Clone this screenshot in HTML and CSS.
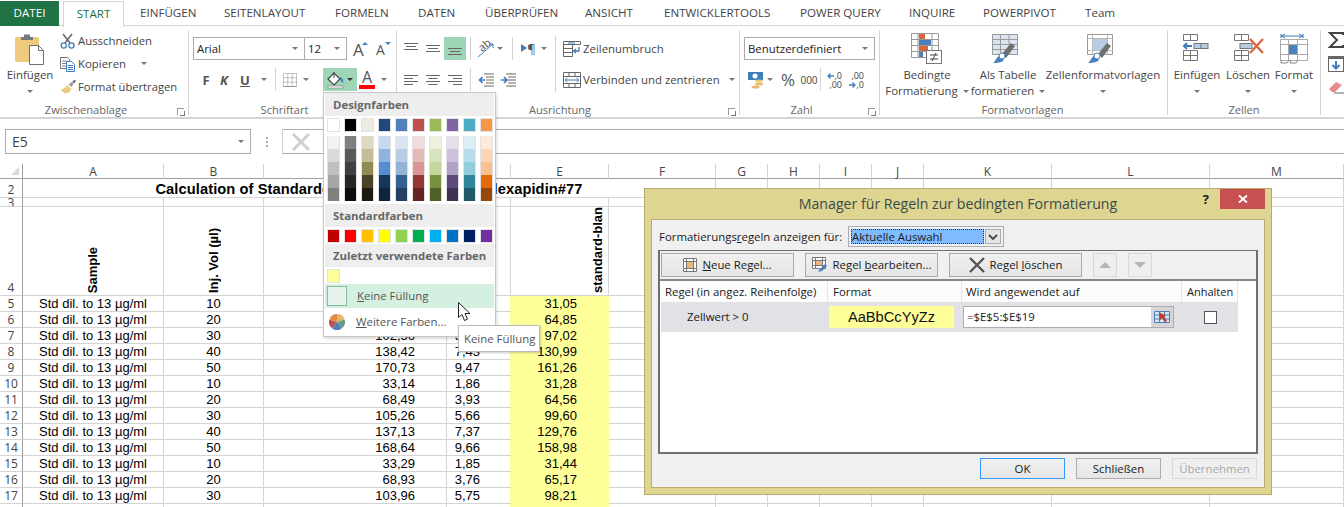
FILE: index.html
```html
<!DOCTYPE html>
<html lang="de">
<head>
<meta charset="utf-8">
<title>Excel</title>
<link rel="stylesheet" href="styles.css">
</head>
<body>
<nav class="tabs">
  <div class="tab"><span class="file">DATEI</span></div>
  <div class="tab"><span class="active">START</span></div>
  <div class="tab">EINFÜGEN</div>
  <div class="tab">SEITENLAYOUT</div>
  <div class="tab">FORMELN</div>
  <div class="tab">DATEN</div>
  <div class="tab">ÜBERPRÜFEN</div>
  <div class="tab">ANSICHT</div>
  <div class="tab">ENTWICKLERTOOLS</div>
  <div class="tab">POWER QUERY</div>
  <div class="tab">INQUIRE</div>
  <div class="tab">POWERPIVOT</div>
  <div class="tab">Team</div>
</nav>

<section class="ribbon">
  <div class="group g1">
    <div class="body row">
      <div class="big w60">
        <svg class="bigicon" viewBox="0 0 32 32"><rect x="1" y="4" width="24" height="25" rx="1.5" fill="#eeca7e"/><path d="M7 4h3V1.500h6V4h3v3H7z" fill="#77787a"/><path d="M15.500 12.500h9l5 5v14h-14z" fill="#fff" stroke="#6f6f6f"/><path d="M24.500 12.500v5h5" fill="none" stroke="#6f6f6f"/></svg>
        <div class="biglabel">Einfügen</div>
        <div class="biglabel"><i class="caret"></i></div>
      </div>
      <div class="smallcol">
        <div class="small"><svg class="ic16" viewBox="0 0 16 16"><path d="M3 1l7 9M12 1l-7 9" stroke="#6a6a6a" stroke-width="1.600" fill="none"/><circle cx="3.700" cy="12.500" r="2.600" fill="none" stroke="#3f7ebd" stroke-width="1.300"/><circle cx="11.500" cy="12.500" r="2.600" fill="none" stroke="#3f7ebd" stroke-width="1.300"/></svg><span>Ausschneiden</span></div>
        <div class="small"><svg class="ic16" viewBox="0 0 16 16"><path d="M.5 1.500h7l2 2v9h-9z" fill="#fff" stroke="#777"/><path d="M2 5h5M2 7.500h5M2 10h5" stroke="#888"/><path d="M6.500 5.500h5l3 3v7h-8z" fill="#fff" stroke="#3f7ebd"/><path d="M8 9.500h5M8 11.500h5M8 13.500h5" stroke="#3f7ebd"/></svg><span>Kopieren</span><i class="caret ml13"></i></div>
        <div class="small"><svg class="ic16" viewBox="0 0 16 16"><path d="M.5 10.500C4 10 6 8 7 6l4.500 4c-1 2-3 4.500-6 4.500-1.500-.5-3.500-2-5-4z" fill="#eeca7e"/><path d="M8.500 5.500l3-2.500 2 2-2 3z" fill="#9c9c9c"/><path d="M12 3l2.500-2.500 1.500 1.500-2 2.500z" fill="#6f6f6f"/></svg><span class="tight">Format übertragen</span></div>
      </div>
    </div>
    <div class="label shifted">Zwischenablage<i class="launcher"></i></div>
  </div>

  <div class="group g2">
    <div class="body stack">
      <div class="line">
        <div class="select fontname"><span>Arial</span><i class="caret"></i></div>
        <div class="select fontsize"><span>12</span><i class="caret"></i></div>
        <div class="btn w20 ml5 grow"><span class="growA">A</span><i class="triup"></i></div>
        <div class="btn w20 ml3 grow"><span class="shrinkA">A</span><i class="tridown"></i></div>
      </div>
      <div class="line">
        <div class="btn w18 ml8 bold f13">F</div>
        <div class="btn w18 bold italic f13">K</div>
        <div class="btn w18 ml3 bold f13 under">U</div>
        <div class="btn w10 ml5"><i class="caret"></i></div>
        <div class="vsep ml6"></div>
        <div class="btn w16 ml6"><svg class="ic14" viewBox="0 0 14 14"><path d="M.5.500h13v13H.5zM4.800.500v13M9.200.500v13M.5 4.800h13M.5 9.200h13" fill="none" stroke="#8a8a8a" stroke-dasharray="1 1"/><path d="M.5 13.500h13" stroke="#999"/></svg></div>
        <div class="btn w10 ml3"><i class="caret"></i></div>
        <div class="fill ml12">
          <svg class="ic18" viewBox="0 0 18 18"><path d="M1 8l6-6 6 6-6 6z" fill="#fff" stroke="#444" stroke-width="1.200"/><path d="M7 1v6" stroke="#444"/><path d="M13 6c3 1 3.500 4 3 6-1.500-.5-3-3-3-6z" fill="#3f7ebd"/><rect x="1" y="15" width="15" height="2" fill="#fff" stroke="#888" stroke-width=".7"/></svg>
          <i class="caret dark ml2"></i>
        </div>
        <div class="btn w20 colA"><span class="bigA">A</span><i class="redbar"></i></div>
        <div class="btn w10 ml2"><i class="caret"></i></div>
      </div>
    </div>
    <div class="label shifted">Schriftart</div>
  </div>

  <div class="group g3">
    <div class="body row">
      <div class="stack alignblock">
        <div class="line pl3">
          <div class="btn w22"><svg class="ic14" viewBox="0 0 14 14"><path d="M0 1.500h14M2 4.500h10M0 7.500h14" stroke="#666"/></svg></div>
          <div class="btn w22"><svg class="ic14" viewBox="0 0 14 14"><path d="M0 3.500h14M2 6.500h10M0 9.500h14" stroke="#666"/></svg></div>
          <div class="btn w22 on"><svg class="ic14" viewBox="0 0 14 14"><path d="M0 6.500h14M2 9.500h10M0 12.500h14" stroke="#666"/></svg></div>
          <div class="vsep ml4"></div>
          <div class="btn w18 ml6"><span class="abtext">ab</span><svg class="ic18" viewBox="0 0 18 18"><path d="M1 17L16 4M16 4h-4M16 4v4" stroke="#3f7ebd" fill="none"/></svg></div>
          <div class="btn w10"><i class="caret"></i></div>
          <div class="vsep ml7"></div>
          <div class="btn w15 ml8 para"><i class="tri"></i>¶</div>
          <div class="btn w16"><i class="caret"></i></div>
        </div>
        <div class="line pl3">
          <div class="btn w22"><svg class="ic14" viewBox="0 0 14 14"><path d="M0 2.500h14M0 5.500h9M0 8.500h14M0 11.500h9" stroke="#666"/></svg></div>
          <div class="btn w22"><svg class="ic14" viewBox="0 0 14 14"><path d="M0 2.500h14M2.500 5.500h9M0 8.500h14M2.500 11.500h9" stroke="#666"/></svg></div>
          <div class="btn w22"><svg class="ic14" viewBox="0 0 14 14"><path d="M0 2.500h14M5 5.500h9M0 8.500h14M5 11.500h9" stroke="#666"/></svg></div>
          <div class="vsep ml4"></div>
          <div class="btn w18 ml6"><svg class="ic16" viewBox="0 0 16 16"><path d="M6 2.500h10M8 5.500h8M8 8.500h8M8 11.500h8M6 14.500h10" stroke="#666" transform="translate(0 -.5)"/><path d="M7 8H2M4.500 5L1.500 8l3 3" stroke="#3f7ebd" stroke-width="1.700" fill="none"/></svg></div>
          <div class="btn w18 ml4"><svg class="ic16" viewBox="0 0 16 16"><path d="M6 2.500h10M8 5.500h8M8 8.500h8M8 11.500h8M6 14.500h10" stroke="#666" transform="translate(0 -.5)"/><path d="M1 8h5M4 5l3 3-3 3" stroke="#3f7ebd" stroke-width="1.700" fill="none"/></svg></div>
        </div>
      </div>
      <div class="tallsep"></div>
      <div class="stack wrapblock">
        <div class="line"><svg class="ic18" viewBox="0 0 18 18"><path d="M.5 1.500h17v3H.5zM.5 4.500h9v4h-9zM.5 8.500h9v4h-9zM.5 12.500h9v4h-9z" fill="#fff" stroke="#666"/><path d="M5 3h7" stroke="#3f7ebd"/><path d="M16 7v4h-5M13 9l-2.500 2 2.500 2" fill="none" stroke="#3f7ebd" stroke-width="1.300"/></svg><span class="ml2">Zeilenumbruch</span></div>
        <div class="line"><svg class="ic18" viewBox="0 0 18 18"><path d="M.5 1.500h17v15H.5zM.5 5.500h17M.5 12.500h17M6 1.500v4M12 1.500v4M6 12.500v4M12 12.500v4" fill="#fff" stroke="#666"/><path d="M2 9h14M4.500 7L2 9l2.500 2M13.500 7L16 9l-2.500 2" fill="none" stroke="#3f7ebd"/></svg><span class="ml2">Verbinden und zentrieren</span><i class="caret ml9"></i></div>
      </div>
    </div>
    <div class="label shifted">Ausrichtung<i class="launcher"></i></div>
  </div>

  <div class="group g4">
    <div class="body stack">
      <div class="line"><div class="select numfmt"><span>Benutzerdefiniert</span><i class="caret"></i></div></div>
      <div class="line">
        <div class="btn w18 ml2"><svg class="ic18" viewBox="0 0 18 18"><rect x="1" y="1" width="15" height="8" fill="#3f7ebd"/><circle cx="8" cy="5" r="2.500" fill="#fff"/><ellipse cx="12" cy="10" rx="4" ry="1.500" fill="#eeca7e"/><ellipse cx="12" cy="13" rx="4" ry="1.500" fill="#eeb56e"/><ellipse cx="8.500" cy="16" rx="4" ry="1.500" fill="#eeb56e"/></svg></div>
        <div class="btn w10"><i class="caret"></i></div>
        <div class="btn w18 ml4 pct">%</div>
        <div class="btn w18 ml3 th">000</div>
        <div class="vsep ml2"></div>
        <div class="btn w16 ml6 dec"><span class="dt1">,0</span><span class="dt2">,00</span><svg class="decarrow" viewBox="0 0 7 6"><path d="M7 3H1M3.500.5L1 3l2.500 2.500" fill="none" stroke="#3f7ebd" stroke-width="1.300"/></svg></div>
        <div class="btn w16 ml6 dec"><span class="dt1">,00</span><span class="dt2">,0</span><svg class="decarrow low" viewBox="0 0 7 6"><path d="M0 3h6M3.500.5L6 3 3.500 5.500" fill="none" stroke="#3f7ebd" stroke-width="1.300"/></svg></div>
      </div>
    </div>
    <div class="label shifted">Zahl<i class="launcher"></i></div>
  </div>

  <div class="group g5">
    <div class="body row">
      <div class="big w90">
        <svg class="bigicon" viewBox="0 0 32 32"><path d="M.5.500h27v24H.5zM7 .5v24M21 .5v24M.5 6.500h27M.5 12.500h27M.5 18.500h27" fill="none" stroke="#999"/><rect x="8" y="1" width="6" height="5" fill="#d9663f"/><rect x="8" y="7" width="12" height="5" fill="#4a81bd"/><rect x="8" y="13" width="9" height="5" fill="#d9663f"/><rect x="8" y="19" width="4" height="5" fill="#4a81bd"/><rect x="15.500" y="17.500" width="15" height="13" fill="#fff" stroke="#777"/><path d="M19 22h8M19 26h8M25 20l-4 8" stroke="#444" fill="none"/></svg>
        <div class="biglabel">Bedingte</div>
        <div class="biglabel">Formatierung<i class="caret ml5"></i></div>
      </div>
      <div class="big w72">
        <svg class="bigicon" viewBox="0 0 32 32"><path d="M.5 1.500h25v20H.5zM8.500 1.500v20M17 1.500v20M.5 6.500h25M.5 11.500h25M.5 16.500h25" fill="#dbe5f1" stroke="#999"/><path d="M.5 1.500h25v5H.5z" fill="none" stroke="#999"/><path d="M1 30c2-1 3-5 6-7l5 4c-2 2-4 3-11 3z" fill="#4a81bd"/><path d="M10 21l9-11 4 3-9 12z" fill="#6f6f6f"/><circle cx="10" cy="23" r="3" fill="#fff" stroke="#4a81bd"/></svg>
        <div class="biglabel">Als Tabelle</div>
        <div class="biglabel">formatieren<i class="caret ml5"></i></div>
      </div>
      <div class="big w118">
        <svg class="bigicon" viewBox="0 0 32 32"><path d="M.5 1.500h25v20H.5z" fill="#fff" stroke="#999"/><path d="M.5 5.500h25M.5 17.500h25M5.500 1.500v20M20.500 1.500v20" stroke="#bbb"/><rect x="6" y="6" width="14" height="11" fill="#b8cce4"/><path d="M1 30c2-1 3-5 6-7l5 4c-2 2-4 3-11 3z" fill="#4a81bd"/><path d="M11 21l9-11 4 3-9 12z" fill="#6f6f6f"/><circle cx="10" cy="23" r="3" fill="#fff" stroke="#4a81bd"/></svg>
        <div class="biglabel">Zellenformatvorlagen</div>
        <div class="biglabel"><i class="caret"></i></div>
      </div>
    </div>
    <div class="label nudged">Formatvorlagen</div>
  </div>

  <div class="group g6">
    <div class="body row">
      <div class="big w50">
        <svg class="bigicon" viewBox="0 0 32 32"><path d="M2.500 1.500h14v6h-14zM9.500 1.500v6M2.500 17.500h14v10h-14zM9.500 17.500v10M2.500 22.500h14" fill="#fff" stroke="#777"/><rect x="13" y="10.500" width="14" height="5" fill="#b8cce4" stroke="#777"/><path d="M20 10.500v5" stroke="#777"/><path d="M11 13H3M6 10l-3 3 3 3" fill="none" stroke="#3f7ebd" stroke-width="2"/></svg>
        <div class="biglabel">Einfügen</div>
        <div class="biglabel"><i class="caret"></i></div>
      </div>
      <div class="big w52">
        <svg class="bigicon" viewBox="0 0 32 32"><path d="M2.500 1.500h14v6h-14zM9.500 1.500v6M2.500 17.500h14v10h-14zM9.500 17.500v10M2.500 22.500h14" fill="#fff" stroke="#777"/><rect x="8" y="10.500" width="12" height="5" fill="#b8cce4" stroke="#777"/><path d="M18 6l13 14M31 6L18 20" stroke="#d9663f" stroke-width="2.400"/></svg>
        <div class="biglabel">Löschen</div>
        <div class="biglabel"><i class="caret"></i></div>
      </div>
      <div class="big w40">
        <svg class="bigicon" viewBox="0 0 32 32"><path d="M3 3h22M3 1v4M25 1v4M7 1L3 3l4 2M21 1l4 2-4 2" fill="none" stroke="#3f7ebd"/><path d="M2.500 6.500h27v21h-27zM10.500 6.500v21M19.500 6.500v21M2.500 11.500h27M2.500 21.500h27" fill="#fff" stroke="#aaa"/><rect x="11" y="12" width="8" height="9" fill="#4a81bd"/><path d="M3 27v3h6l2-3M13 27l-1 3h6l2-3" fill="none" stroke="#888"/></svg>
        <div class="biglabel">Format</div>
        <div class="biglabel"><i class="caret"></i></div>
      </div>
    </div>
    <div class="label nudged">Zellen</div>
  </div>

  <div class="group g7">
    <div class="body edit">
      <svg class="ic16 sigma" viewBox="0 0 16 16"><path d="M15 3V1H2l7 7-7 7h13v-2" fill="none" stroke="#444" stroke-width="2"/></svg>
      <svg class="ic16" viewBox="0 0 16 16"><rect x=".5" y=".5" width="15" height="15" fill="#fff" stroke="#666"/><rect x="0" y="0" width="16" height="3" fill="#666"/><path d="M8 5v7M4.500 9L8 12.500 11.500 9" fill="none" stroke="#3f7ebd" stroke-width="2"/></svg>
      <svg class="ic16" viewBox="0 0 16 16"><path d="M1 9l7-7 6 3-7 7H4z" fill="#e88a8a"/><path d="M6 13h10" stroke="#666"/></svg>
    </div>
  </div>
</section>

<section class="formula">
  <div class="namebox"><span>E5</span><i class="caret"></i></div>
  <div class="dots"><i></i><i></i><i></i></div>
  <div class="fx">
    <div class="fxbtn"><svg class="ic18" viewBox="0 0 18 18"><path d="M1 1l16 16M17 1L1 17" stroke="#cfcfcf" stroke-width="3"/></svg></div>
  </div>
</section>

<table class="sheet">
  <colgroup>
    <col class="c0"><col class="ca"><col class="cb"><col class="cc"><col class="cd"><col class="ce"><col class="cf"><col class="cg"><col class="cg"><col class="cg"><col class="cg"><col class="ck"><col class="cl"><col class="cm">
  </colgroup>
  <thead>
    <tr><th class="corner"><i></i></th><th>A</th><th>B</th><th>C</th><th>D</th><th>E</th><th>F</th><th>G</th><th>H</th><th>I</th><th>J</th><th>K</th><th>L</th><th>M</th></tr>
  </thead>
  <tbody>
    <tr class="r2"><td class="rh">2</td><td colspan="6" class="title">Calculation of Standardcurves for Bezafibrate-Clexapidin#77</td><td></td><td></td><td></td><td></td><td></td><td></td><td></td></tr>
    <tr class="r3"><td class="rh"><span class="clip">3</span></td><td></td><td></td><td></td><td></td><td></td><td></td><td></td><td></td><td></td><td></td><td></td><td></td><td></td></tr>
    <tr class="r4"><td class="rh">4</td><td class="m"><div class="vt">Sample</div></td><td class="m"><div class="vt">Inj. Vol (µl)</div></td><td></td><td></td><td class="vr"><div class="vt">standard-blan</div></td><td></td><td></td><td></td><td></td><td></td><td></td><td></td><td></td></tr>
    <tr><td class="rh">5</td><td class="m">Std dil. to 13 µg/ml</td><td class="m">10</td><td class="c"></td><td class="d"></td><td class="e">31,05</td><td></td><td></td><td></td><td></td><td></td><td></td><td></td><td></td></tr>
    <tr><td class="rh">6</td><td class="m">Std dil. to 13 µg/ml</td><td class="m">20</td><td class="c"></td><td class="d"></td><td class="e">64,85</td><td></td><td></td><td></td><td></td><td></td><td></td><td></td><td></td></tr>
    <tr><td class="rh">7</td><td class="m">Std dil. to 13 µg/ml</td><td class="m">30</td><td class="c">102,56</td><td class="d">5,54</td><td class="e">97,02</td><td></td><td></td><td></td><td></td><td></td><td></td><td></td><td></td></tr>
    <tr><td class="rh">8</td><td class="m">Std dil. to 13 µg/ml</td><td class="m">40</td><td class="c">138,42</td><td class="d">7,43</td><td class="e">130,99</td><td></td><td></td><td></td><td></td><td></td><td></td><td></td><td></td></tr>
    <tr><td class="rh">9</td><td class="m">Std dil. to 13 µg/ml</td><td class="m">50</td><td class="c">170,73</td><td class="d">9,47</td><td class="e">161,26</td><td></td><td></td><td></td><td></td><td></td><td></td><td></td><td></td></tr>
    <tr><td class="rh">10</td><td class="m">Std dil. to 13 µg/ml</td><td class="m">10</td><td class="c">33,14</td><td class="d">1,86</td><td class="e">31,28</td><td></td><td></td><td></td><td></td><td></td><td></td><td></td><td></td></tr>
    <tr><td class="rh">11</td><td class="m">Std dil. to 13 µg/ml</td><td class="m">20</td><td class="c">68,49</td><td class="d">3,93</td><td class="e">64,56</td><td></td><td></td><td></td><td></td><td></td><td></td><td></td><td></td></tr>
    <tr><td class="rh">12</td><td class="m">Std dil. to 13 µg/ml</td><td class="m">30</td><td class="c">105,26</td><td class="d">5,66</td><td class="e">99,60</td><td></td><td></td><td></td><td></td><td></td><td></td><td></td><td></td></tr>
    <tr><td class="rh">13</td><td class="m">Std dil. to 13 µg/ml</td><td class="m">40</td><td class="c">137,13</td><td class="d">7,37</td><td class="e">129,76</td><td></td><td></td><td></td><td></td><td></td><td></td><td></td><td></td></tr>
    <tr><td class="rh">14</td><td class="m">Std dil. to 13 µg/ml</td><td class="m">50</td><td class="c">168,64</td><td class="d">9,66</td><td class="e">158,98</td><td></td><td></td><td></td><td></td><td></td><td></td><td></td><td></td></tr>
    <tr><td class="rh">15</td><td class="m">Std dil. to 13 µg/ml</td><td class="m">10</td><td class="c">33,29</td><td class="d">1,85</td><td class="e">31,44</td><td></td><td></td><td></td><td></td><td></td><td></td><td></td><td></td></tr>
    <tr><td class="rh">16</td><td class="m">Std dil. to 13 µg/ml</td><td class="m">20</td><td class="c">68,93</td><td class="d">3,76</td><td class="e">65,17</td><td></td><td></td><td></td><td></td><td></td><td></td><td></td><td></td></tr>
    <tr><td class="rh">17</td><td class="m">Std dil. to 13 µg/ml</td><td class="m">30</td><td class="c">103,96</td><td class="d">5,75</td><td class="e">98,21</td><td></td><td></td><td></td><td></td><td></td><td></td><td></td><td></td></tr>
    <tr><td class="rh"></td><td></td><td></td><td></td><td class="d"></td><td class="e"></td><td></td><td></td><td></td><td></td><td></td><td></td><td></td><td></td></tr>
  </tbody>
</table>

<aside class="menu">
  <div class="mhead">Designfarben</div>
  <div class="swatches top2">
    <i class="sw c-ffffff"></i><i class="sw c-000000"></i><i class="sw c-eeece1"></i><i class="sw c-1f497d"></i><i class="sw c-4f81bd"></i><i class="sw c-c0504d"></i><i class="sw c-9bbb59"></i><i class="sw c-8064a2"></i><i class="sw c-4bacc6"></i><i class="sw c-f79646"></i>
  </div>
  <div class="swatches shades">
    <i class="col s1"></i><i class="col s2"></i><i class="col s3"></i><i class="col s4"></i><i class="col s5"></i><i class="col s6"></i><i class="col s7"></i><i class="col s8"></i><i class="col s9"></i><i class="col s10"></i>
  </div>
  <div class="mhead mt3">Standardfarben</div>
  <div class="swatches top2">
    <i class="sw c-c00000"></i><i class="sw c-ff0000"></i><i class="sw c-ffc000"></i><i class="sw c-ffff00"></i><i class="sw c-92d050"></i><i class="sw c-00b050"></i><i class="sw c-00b0f0"></i><i class="sw c-0070c0"></i><i class="sw c-002060"></i><i class="sw c-7030a0"></i>
  </div>
  <div class="mhead mt1">Zuletzt verwendete Farben</div>
  <div class="swatches top2"><i class="sw c-ffff99"></i></div>
  <div class="mitem hot"><i class="nofill"></i><span><u>K</u>eine Füllung</span></div>
  <div class="mitem more">
    <svg class="ic16" viewBox="0 0 16 16"><path d="M8 8L8 0A8 8 0 0 1 15.500 5.500z" fill="#e3b76a"/><path d="M8 8l7.500-2.500A8 8 0 0 1 13 14.300z" fill="#6f9a7b"/><path d="M8 8l5 6.300A8 8 0 0 1 3 14.300z" fill="#4a81bd"/><path d="M8 8l-5 6.300A8 8 0 0 1 .5 5.500z" fill="#c0504d"/><path d="M8 8L.5 5.500A8 8 0 0 1 8 0z" fill="#e08a4a"/></svg>
    <span><u>W</u>eitere Farben...</span>
  </div>
</aside>

<svg class="cursor" viewBox="0 0 13 20"><path d="M.5.500v15l3.500-3 2.500 6 3-1.300-2.500-5.700h5z" fill="#fff" stroke="#222"/></svg>
<div class="tip">Keine Füllung</div>

<aside class="dialog">
  <header class="dtitle">
    <span></span>
    <span class="dname">Manager für Regeln zur bedingten Formatierung</span>
    <div class="dctl"><span class="help">?</span><span class="close">
      <svg viewBox="0 0 10 10"><path d="M1 1.500l8 7M9 1.500l-8 7" stroke="#fff" stroke-width="1.800"/></svg></span></div>
  </header>
  <div class="dbody">
    <div class="drow">
      <label class="dlabel">Formatierungs<u>r</u>egeln anzeigen für:</label>
      <div class="combo"><span class="chosen">Aktuelle Auswahl</span><span class="cbtn"><svg viewBox="0 0 10 8"><path d="M1 2l4 4 4-4" fill="none" stroke="#444" stroke-width="1.800"/></svg></span></div>
    </div>
    <div class="frame">
      <div class="actions">
        <div class="dbtn"><svg class="ic14" viewBox="0 0 14 14"><path d="M.5.500h13v13H.5zM.5 3.500h13M.5 10.500h13M3.500.5v13M10.500.5v13" fill="#fff" stroke="#777"/><rect x="4" y="4" width="6" height="6" fill="#e8b97e"/></svg><span><u>N</u>eue Regel...</span></div>
        <div class="dbtn"><svg class="ic16" viewBox="0 0 16 16"><path d="M.5.500h13v11H.5zM.5 3.500h13M.5 8.500h13M3.500.5v11M10.500.5v11" fill="#fff" stroke="#777"/><rect x="4" y="4" width="6" height="4" fill="#e8b97e"/><path d="M6 15l2-3 5-5 2 2-5 5z" fill="#4a81bd"/></svg><span>Regel <u>b</u>earbeiten...</span></div>
        <div class="dbtn"><svg class="ic16" viewBox="0 0 16 16"><path d="M1 1l14 14M15 1L1 15" stroke="#555" stroke-width="2.400"/></svg><span>Regel <u>l</u>öschen</span></div>
        <div class="dbtn sq off"><i class="up"></i></div>
        <div class="dbtn sq off"><i class="down"></i></div>
      </div>
      <div class="list">
        <div class="lhead">
          <span>Regel (in angez. Reihenfolge)</span><span class="fmt">Format</span><span>Wird angewendet auf</span><span class="stop">Anhalten</span>
        </div>
        <div class="lrow">
          <span class="rule">Zellwert &gt; 0</span>
          <span class="preview">AaBbCcYyZz</span>
          <div class="applies"><span class="ref">=$E$5:$E$19</span><span class="refbtn"><svg class="ic16" viewBox="0 0 16 16"><path d="M.5 2.500h15v11H.5zM.5 6h15M.5 10h15M5.500 2.500v11M10.500 2.500v11" fill="#dbe5f1" stroke="#4a81bd"/><path d="M5 3l7 4-2 1 3 4-2 1-3-4-2 2z" fill="#c0392b"/></svg></span></div>
          <span class="checkwrap"><i class="check"></i></span>
        </div>
      </div>
    </div>
    <div class="dfoot">
      <div class="fbtn default">OK</div>
      <div class="fbtn">Schließen</div>
      <div class="fbtn dis">Übernehmen</div>
    </div>
  </div>
</aside>
</body>
</html>
```
FILE: styles.css
```css
* { box-sizing: border-box; }
html, body { margin: 0; height: 507px; overflow: hidden; background: #fff; }
body { position: relative; width: 1344px; font: 11.4px/16px "Open Sans", "Noto Sans", sans-serif; color: #444; }
i { display: block; font-style: normal; }
svg { display: block; flex: none; }

.tabs { display: grid; grid-template-columns: 63px 77px 84px 111px 83px 67px 100px 79px 136px 109px 74px 102px 1fr; height: 26px; border-bottom: 1px solid #d4d4d4; font-size: 11.6px; line-height: 25px; }
.tab { white-space: nowrap; color: #444; }
.file { display: block; width: 59px; height: 25px; margin-top: 1px; background: #217346; color: #fff; text-align: center; line-height: 24px; }
.active { display: block; width: 61px; height: 26px; margin-top: 1px; background: #fff; border: 1px solid #d4d4d4; border-bottom: 0; color: #217346; text-align: center; line-height: 23px; position: relative; }

.ribbon { display: flex; height: 93px; border-bottom: 2px solid #d4d4d4; padding-top: 4px; }
.group { display: flex; flex-direction: column; height: 85px; border-right: 1px solid #d4d4d4; flex: none; }
.g1 { width: 189px; } .g2 { width: 208px; } .g3 { width: 343px; } .g4 { width: 140px; } .g5 { width: 288px; padding-left: 2px; } .g6 { width: 153px; padding-left: 4px; } .g7 { width: 23px; border: 0; padding-left: 7px; }
.body { height: 73px; flex: none; }
.row { display: flex; }
.stack { display: flex; flex-direction: column; gap: 8px; padding-top: 7px; }
.label { position: relative; height: 14px; line-height: 14px; text-align: center; color: #666; white-space: nowrap; font-size: 11.1px; }
.shifted { padding-right: 16px; }
.nudged { padding-right: 4px; }
.launcher { position: absolute; right: 4px; top: 5px; width: 7px; height: 7px; border-left: 1px solid #999; border-top: 1px solid #999; }
.launcher::after { content: ""; position: absolute; right: -1px; bottom: -1px; width: 4px; height: 4px; border-right: 1px solid #777; border-bottom: 1px solid #777; }

.big { display: flex; flex-direction: column; align-items: center; padding-top: 3px; flex: none; white-space: nowrap; }
.w60 { width: 60px; } .w90 { width: 90px; } .w72 { width: 72px; } .w118 { width: 118px; } .w50 { width: 50px; } .w52 { width: 52px; } .w40 { width: 40px; }
.bigicon { width: 32px; height: 32px; margin-bottom: 2px; }
.biglabel { display: flex; align-items: center; justify-content: center; height: 16px; line-height: 16px; }
.smallcol { margin-top: -1px; display: flex; flex-direction: column; }
.small { display: flex; align-items: center; height: 23px; gap: 2px; white-space: nowrap; }
.tight { font-size: 11.2px; }
.ic14 { width: 14px; height: 14px; } .ic16 { width: 16px; height: 16px; } .ic18 { width: 18px; height: 18px; }

.caret { width: 0; height: 0; border: 3.5px solid transparent; border-top-color: #777; border-bottom: 0; flex: none; }
.caret.dark { border-top-color: #333; }
.ml2 { margin-left: 2px; } .ml3 { margin-left: 3px; } .ml4 { margin-left: 4px; } .ml5 { margin-left: 5px; } .ml6 { margin-left: 6px; } .ml7 { margin-left: 7px; } .ml8 { margin-left: 8px; } .ml9 { margin-left: 9px; } .ml12 { margin-left: 12px; } .ml13 { margin-left: 13px; }
.pl3 { padding-left: 3px; }

.line { display: flex; align-items: center; height: 23px; white-space: nowrap; }
.g2 .line:first-child { padding-left: 4px; }
.select { display: flex; align-items: center; justify-content: space-between; height: 23px; border: 1px solid #ababab; padding: 0 6px 0 3px; color: #222; background: #fff; }
.fontname { width: 111px; border-right: 0; }
.fontsize { width: 43px; }
.numfmt { width: 131px; margin-left: 4px; }
.g4 .line:last-child { padding-left: 5px; }
.btn { display: flex; align-items: center; justify-content: center; height: 23px; flex: none; position: relative; }
.w10 { width: 10px; } .w15 { width: 15px; } .w16 { width: 16px; } .w18 { width: 18px; } .w20 { width: 20px; } .w22 { width: 22px; }
.bold { font-weight: 700; } .italic { font-style: italic; } .f13 { font-size: 13px; color: #555; } .under { text-decoration: underline; }
.vsep { width: 1px; height: 23px; background: #d4d4d4; flex: none; }
.tallsep { width: 1px; height: 56px; margin-top: 6px; background: #d4d4d4; flex: none; }
.on { background: #9fd5b7; }
.fill { display: flex; align-items: center; justify-content: flex-start; width: 34px; height: 23px; padding-left: 4px; background: #9fd5b7; flex: none; }
.colA { flex-direction: column; }
.bigA { font-size: 16px; line-height: 15px; color: #555; }
.redbar { width: 16px; height: 4px; background: #f00; }
.grow { justify-content: flex-start; padding-left: 1px; }
.growA { font-size: 17px; line-height: 20px; color: #555; padding-top: 3px; }
.shrinkA { font-size: 14px; line-height: 20px; color: #555; padding-top: 3px; }
.triup, .tridown { position: absolute; right: 4px; top: 5px; width: 0; height: 0; border: 3px solid transparent; }
.triup { border-top: 0; border-bottom: 3px solid #3f7ebd; }
.tridown { border-bottom: 0; border-top: 3px solid #3f7ebd; }
.abtext { position: absolute; left: 1px; top: 1px; font-size: 11px; line-height: 14px; transform: rotate(-40deg); color: #555; }
.dec { font-size: 9px; line-height: 8px; color: #444; }
.dt1 { position: absolute; right: 1px; top: 4px; }
.dt2 { position: absolute; right: 1px; top: 13px; }
.decarrow { position: absolute; left: 0; top: 5px; width: 7px; height: 6px; }
.decarrow.low { top: 14px; }
.para { font-size: 13px; color: #555; padding-left: 6px; }
.tri { position: absolute; left: 0; top: 7px; width: 0; height: 0; border: 4px solid transparent; border-left: 6px solid #3f7ebd; border-right: 0; }
.pct { font-size: 17px; color: #555; }
.th { font-size: 10px; }
.alignblock { width: 158px; }
.wrapblock { padding-left: 7px; }
.edit { display: flex; flex-direction: column; gap: 8px; padding-top: 0; }
.sigma { margin-top: 2px; }

.formula { display: flex; align-items: stretch; height: 25px; margin-top: 10px; padding-left: 5px; }
.namebox { display: flex; align-items: center; justify-content: space-between; width: 246px; border: 1px solid #ababab; padding: 0 6px; color: #444; font-size: 14px; }
.dots { width: 31px; display: flex; flex-direction: column; align-items: center; justify-content: center; gap: 2px; }
.dots i { width: 2px; height: 2px; background: #aaa; }
.fx { flex: 1; border: 1px solid #ababab; border-right: 0; border-left: 1px solid #d4d4d4; }
.fxbtn { display: flex; align-items: center; justify-content: center; width: 36px; height: 23px; }

.sheet { margin-top: 10px; border-collapse: separate; border-spacing: 0; table-layout: fixed; width: 1344px; font: 13px/15px "Liberation Sans", Arial, sans-serif; color: #000; }
.c0 { width: 23px; } .ca { width: 141px; } .cb { width: 100px; } .cc { width: 183px; } .cd { width: 64px; } .ce { width: 98px; } .cf { width: 107px; } .cg { width: 52px; } .ck { width: 128px; } .cl { width: 158px; } .cm { width: 134px; }
.sheet th { height: 15px; padding: 2px 0 0; font: 12px/12px "Open Sans", sans-serif; color: #444; text-align: center; border-right: 1px solid #d4d4d4; border-bottom: 1px solid #9f9f9f; }
.sheet td { height: 16px; padding: 0; border-right: 1px solid #d4d4d4; border-bottom: 1px solid #d4d4d4; white-space: nowrap; overflow: hidden; vertical-align: bottom; }
.sheet th.corner { position: relative; border-right-color: #9f9f9f; }
.corner i { position: absolute; right: 3px; bottom: 3px; width: 0; height: 0; border-left: 8px solid transparent; border-bottom: 8px solid #d9d9d9; }
.sheet td.rh { font: 12px/15px "Open Sans", sans-serif; color: #444; text-align: center; border-right-color: #9f9f9f; }
.r2 td { height: 19px; }
.r3 td { height: 9px; line-height: 8px; }
.r4 td { height: 89px; }
.clip { display: block; height: 8px; overflow: hidden; line-height: 9px; }
.sheet td.title { font: 700 14.67px/16px "Liberation Sans", Arial, sans-serif; letter-spacing: .09px; text-align: center; }
.m { text-align: center; }
.vt { display: block; width: 14px; margin: 0 auto; writing-mode: vertical-rl; transform: rotate(180deg); font-weight: 700; font-size: 13px; line-height: 14px; padding-top: 2px; }
.sheet td.vr { padding-right: 3px; }
.vr .vt { margin: 0 0 0 auto; }
.sheet td.c { text-align: right; padding-right: 31px; }
.sheet td.d { text-align: right; padding-right: 30px; border-right-color: #ffff99; }
.sheet td.e { text-align: right; padding-right: 31px; background: #ffff99; border-color: #ffff99; }

.menu { position: absolute; left: 323px; top: 92px; width: 173px; height: 245px; padding: 0 1px; background: #fff; border: 1px solid #c6c6c6; box-shadow: 1px 2px 3px rgba(0,0,0,.15); }
.mhead { height: 23px; line-height: 24px; padding-left: 8px; background: #eee; color: #666; font-weight: 700; white-space: nowrap; }
.mt3 { margin-top: 3px; } .mt1 { margin-top: 1px; }
.swatches { display: flex; gap: 4px; padding-left: 2px; }
.top2 { padding-top: 2px; }
.shades { padding-top: 4px; }
.sw { width: 13px; height: 14px; border: 1px solid #e2e2e4; }
.col { width: 13px; height: 65px; border: 1px solid #e2e2e4; border-width: 0 1px; }
.mitem { display: flex; align-items: center; white-space: nowrap; color: #555; }
.hot { height: 24px; margin-top: 1px; background: #d3f0e0; padding-left: 2px; gap: 10px; }
.more { height: 27px; padding-left: 4px; gap: 11px; }
.nofill { width: 20px; height: 20px; background: #eaf2ee; border: 1px solid #86bd9f; }
.c-ffffff { background: #ffffff; } .c-000000 { background: #000000; } .c-eeece1 { background: #eeece1; } .c-1f497d { background: #1f497d; } .c-4f81bd { background: #4f81bd; } .c-c0504d { background: #c0504d; } .c-9bbb59 { background: #9bbb59; } .c-8064a2 { background: #8064a2; } .c-4bacc6 { background: #4bacc6; } .c-f79646 { background: #f79646; }
.c-c00000 { background: #c00000; } .c-ff0000 { background: #ff0000; } .c-ffc000 { background: #ffc000; } .c-ffff00 { background: #ffff00; } .c-92d050 { background: #92d050; } .c-00b050 { background: #00b050; } .c-00b0f0 { background: #00b0f0; } .c-0070c0 { background: #0070c0; } .c-002060 { background: #002060; } .c-7030a0 { background: #7030a0; } .c-ffff99 { background: #ffff99; }
.s1 { background: linear-gradient(#f2f2f2 20%, #d9d9d9 20% 40%, #bfbfbf 40% 60%, #a6a6a6 60% 80%, #808080 80%); }
.s2 { background: linear-gradient(#7f7f7f 20%, #595959 20% 40%, #404040 40% 60%, #262626 60% 80%, #0d0d0d 80%); }
.s3 { background: linear-gradient(#ddd9c3 20%, #c4bd97 20% 40%, #938953 40% 60%, #494429 60% 80%, #1d1b10 80%); }
.s4 { background: linear-gradient(#c6d9f0 20%, #8db3e2 20% 40%, #548dd4 40% 60%, #17365d 60% 80%, #0f243e 80%); }
.s5 { background: linear-gradient(#dbe5f1 20%, #b8cce4 20% 40%, #95b3d7 40% 60%, #366092 60% 80%, #244061 80%); }
.s6 { background: linear-gradient(#f2dcdb 20%, #e5b9b7 20% 40%, #d99694 40% 60%, #953734 60% 80%, #632423 80%); }
.s7 { background: linear-gradient(#ebf1dd 20%, #d7e3bc 20% 40%, #c3d69b 40% 60%, #76923c 60% 80%, #4f6128 80%); }
.s8 { background: linear-gradient(#e5e0ec 20%, #ccc1d9 20% 40%, #b2a2c7 40% 60%, #5f497a 60% 80%, #3f3151 80%); }
.s9 { background: linear-gradient(#dbeef3 20%, #b7dde8 20% 40%, #92cddc 40% 60%, #31859b 60% 80%, #205867 80%); }
.s10 { background: linear-gradient(#fdeada 20%, #fbd5b5 20% 40%, #fac08f 40% 60%, #e36c09 60% 80%, #974806 80%); }

.cursor { position: absolute; left: 458px; top: 302px; width: 13px; height: 20px; }
.tip { position: absolute; left: 458px; top: 325px; width: 82px; height: 27px; background: #fff; border: 1px solid #bbb; box-shadow: 1px 1px 2px rgba(0,0,0,.2); color: #555; line-height: 25px; padding-left: 5px; white-space: nowrap; }

.dialog { position: absolute; left: 644px; top: 188px; width: 628px; height: 307px; background: #ded590; border: 1px solid #b5ab6f; display: flex; flex-direction: column; color: #1a1a1a; }
.dtitle { display: grid; grid-template-columns: 1fr auto 1fr; height: 30px; flex: none; }
.dname { font-size: 14.15px; line-height: 30px; color: #3a4a4a; white-space: nowrap; }
.dctl { display: flex; justify-content: flex-end; padding-right: 6px; }
.help { font-weight: 700; font-size: 13px; line-height: 20px; margin-right: 11px; color: #222; }
.close { display: flex; align-items: center; justify-content: center; width: 45px; height: 20px; background: #c75050; }
.close svg { width: 10px; height: 10px; }
.dbody { margin: 0 6px 6px; flex: 1; background: #f0f0f0; border: 1px solid #b9ad70; padding: 6px 6px 0; display: flex; flex-direction: column; }
.drow { display: flex; align-items: center; height: 21px; flex: none; }
.dlabel { width: 190px; padding-left: 1px; white-space: nowrap; }
.combo { display: flex; width: 156px; height: 21px; border: 1px solid #abadb3; padding: 2px; }
.chosen { flex: 1; background: #80bbff; outline: 1px dotted #333; outline-offset: -1px; line-height: 15px; padding-left: 1px; }
.cbtn { display: flex; align-items: center; justify-content: center; width: 16px; margin-left: 1px; background: #e5e5e5; border: 1px solid #acacac; }
.cbtn svg { width: 10px; height: 8px; }
.frame { width: 600px; height: 204px; margin-top: 3px; flex: none; border: 2px solid #6f6f6f; border-top-width: 1px; display: flex; flex-direction: column; padding: 2px 1px 0 1px; }
.actions { display: flex; gap: 11px; height: 24px; flex: none; }
.dbtn { display: flex; align-items: center; justify-content: center; gap: 5px; width: 133px; height: 24px; border: 1px solid #acacac; background: linear-gradient(#f0f0f0, #e5e5e5); white-space: nowrap; }
.sq { width: 24px; }
.off { background: #efefef; border-color: #d9d9d9; }
.up, .down { width: 0; height: 0; border: 6px solid transparent; border-top: 0; border-bottom: 6px solid #b5b5b5; }
.down { border-bottom: 0; border-top: 6px solid #b5b5b5; }
.list { flex: 1; margin: 2px -1px 0; background: #fff; border-top: 2px solid #828790; padding-left: 1px; }
.lhead, .lrow { display: grid; width: 577px; grid-template-columns: 167px 134px 220px 56px; }
.lhead { height: 21px; line-height: 21px; }
.lhead span { padding-left: 4px; border-right: 1px solid #dde7f2; white-space: nowrap; background: #fcfcfc; }
.lhead .fmt { padding-left: 5px; }
.lhead .stop { padding-left: 5px; font-size: 11px; }
.lrow { height: 30px; align-items: center; background: #e1e1e6; }
.rule { padding-left: 26px; }
.preview { width: 125px; height: 22px; margin-left: 1px; background: #ffff99; text-align: center; font: 14.67px/22px "Liberation Sans", Arial, sans-serif; color: #111; }
.applies { display: flex; width: 211px; height: 22px; margin-left: 1px; border: 1px solid #abadb3; background: #fff; }
.ref { flex: 1; padding-left: 3px; line-height: 20px; }
.refbtn { display: flex; align-items: center; justify-content: center; width: 22px; background: #d6d6d6; }
.checkwrap { display: flex; justify-content: center; }
.check { width: 13px; height: 13px; background: #fff; border: 1px solid #555; }
.dfoot { display: flex; justify-content: flex-end; gap: 11px; margin-top: 4px; padding-right: 1px; }
.fbtn { width: 85px; height: 21px; border: 1px solid #acacac; background: linear-gradient(#f0f0f0, #e5e5e5); text-align: center; line-height: 19px; }
.default { border-color: #3399ff; }
.dis { color: #a8a8a8; border-color: #d9d9d9; background: #efefef; }
```
